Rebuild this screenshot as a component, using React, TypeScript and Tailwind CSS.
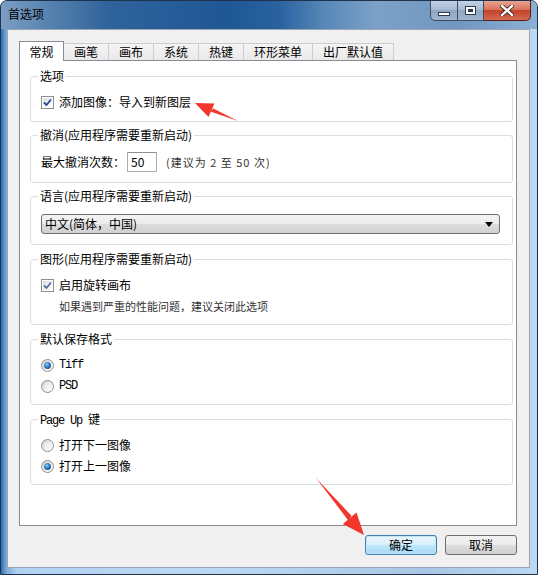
import React from "react";

function CheckBox({ light }: { light?: boolean }) {
  return (
    <span className="w-[13px] h-[13px] shrink-0 border border-[#8e8f8f] bg-white p-px flex">
      <span className="flex-1 bg-[linear-gradient(135deg,#d9dadb_0%,#f4f4f4_60%,#fdfdfd_100%)] flex items-center justify-center">
        <svg width="9" height="9" viewBox="0 0 9 9">
          <path
            d="M1 4.5 L3.5 7 L8 1.5"
            fill="none"
            stroke={light ? "#5b6f9e" : "#25428f"}
            strokeWidth="1.8"
          />
        </svg>
      </span>
    </span>
  );
}

function Radio({ checked }: { checked?: boolean }) {
  return (
    <span className="w-[13px] h-[13px] shrink-0 rounded-full border border-[#8e8f8f] bg-[linear-gradient(135deg,#cfd0d1_0%,#f1f1f1_60%,#ffffff_100%)] flex items-center justify-center">
      {checked ? (
        <span className="w-[7px] h-[7px] rounded-full bg-[radial-gradient(circle_at_40%_35%,#8fcdf2_0%,#2f78bd_45%,#123f74_100%)]" />
      ) : (
        <span className="w-[7px] h-[7px] rounded-full bg-[linear-gradient(135deg,#e6e6e6,#fafafa)]" />
      )}
    </span>
  );
}

function Group({
  label,
  className,
  children,
}: {
  label: React.ReactNode;
  className: string;
  children: React.ReactNode;
}) {
  return (
    <div className={className}>
      <span className="absolute -top-[9px] left-[7px] bg-white px-[2px] leading-[16px]">{label}</span>
      {children}
    </div>
  );
}

export default function App() {
  return (
    <div className="relative w-[538px] h-[575px] overflow-hidden bg-white font-['Noto_Sans_CJK_SC',sans-serif] text-[12px] text-black">
      <div className="flex flex-col w-full h-full rounded-t-[7px] overflow-hidden border border-[#1c324d] bg-[linear-gradient(90deg,#2f6eae_0%,#7aa9d8_1%,#b2d2f0_3%,#bcd8f3_40%,#a9c7e4_80%,#bcd8f3_100%)]">
        {/* title bar */}
        <div className="h-[28px] shrink-0 flex justify-between bg-[linear-gradient(90deg,#7c9fc3_0%,#5a85b1_8%,#2f639c_20%,#1f5795_42%,#2a62a0_52%,#5686b7_60%,#7ca1c8_70%,#7197c0_85%,#8cafd4_100%)]">
          <div className="pl-[7px] pt-[5px] leading-[16px] text-[12px] text-black">首选项</div>
          <div className="flex pr-[6px] -mt-px h-[21px]">
            <div className="w-[28px] h-full rounded-bl-[5px] border border-[#3b4e66] bg-[linear-gradient(180deg,#c4d2e3_0%,#a9bcd3_45%,#8ea7c4_50%,#9fb5cf_100%)] flex items-end justify-center pb-[4px]">
              <span className="w-[12px] h-[4px] bg-white border border-[#2b3b50]" />
            </div>
            <div className="w-[26px] h-full border border-l-0 border-[#3b4e66] bg-[linear-gradient(180deg,#c4d2e3_0%,#a9bcd3_45%,#8ea7c4_50%,#9fb5cf_100%)] flex items-center justify-center">
              <span className="w-[11px] h-[9px] bg-white border border-[#2b3b50] p-[2px] flex">
                <span className="flex-1 border border-[#2b3b50] border-t-2 bg-[#dfe6ee]" />
              </span>
            </div>
            <div className="w-[47px] h-full rounded-br-[5px] border border-l-0 border-[#5a1d14] bg-[linear-gradient(180deg,#e8a493_0%,#d8735e_45%,#c2432b_50%,#d66a52_100%)] flex items-center justify-center">
              <svg width="14" height="11" viewBox="0 0 14 11">
                <path d="M2 1 L12 10 M12 1 L2 10" stroke="#3a1a14" strokeWidth="4" strokeLinecap="square" />
                <path d="M2 1 L12 10 M12 1 L2 10" stroke="#ffffff" strokeWidth="2.4" strokeLinecap="square" />
              </svg>
            </div>
          </div>
        </div>

        {/* body */}
        <div className="flex-1 pl-[6px] pr-[7px] pb-[6px] flex">
          <div className="flex-1 flex flex-col bg-[#f0f0f0] border border-[#9aa6b4] pt-[11px] pl-[11px] pr-[12px]">
            {/* tabs */}
            <div className="flex items-end h-[19px]">
              <div className="relative z-10 -mb-px h-[20px] w-[45px] bg-white border border-b-0 border-[#898c95] flex items-center justify-center leading-[16px]">
                常规
              </div>
              <div className="h-[17px] w-[45px] border border-b-0 border-l-0 border-[#c9ccd1] bg-[linear-gradient(#f4f4f4,#e9e9e9)] flex items-center justify-center leading-[16px]">
                画笔
              </div>
              <div className="h-[17px] w-[45px] border border-b-0 border-l-0 border-[#c9ccd1] bg-[linear-gradient(#f4f4f4,#e9e9e9)] flex items-center justify-center leading-[16px]">
                画布
              </div>
              <div className="h-[17px] w-[45px] border border-b-0 border-l-0 border-[#c9ccd1] bg-[linear-gradient(#f4f4f4,#e9e9e9)] flex items-center justify-center leading-[16px]">
                系统
              </div>
              <div className="h-[17px] w-[45px] border border-b-0 border-l-0 border-[#c9ccd1] bg-[linear-gradient(#f4f4f4,#e9e9e9)] flex items-center justify-center leading-[16px]">
                热键
              </div>
              <div className="h-[17px] w-[69px] border border-b-0 border-l-0 border-[#c9ccd1] bg-[linear-gradient(#f4f4f4,#e9e9e9)] flex items-center justify-center leading-[16px]">
                环形菜单
              </div>
              <div className="h-[17px] w-[81px] border border-b-0 border-l-0 border-[#c9ccd1] bg-[linear-gradient(#f4f4f4,#e9e9e9)] flex items-center justify-center leading-[16px]">
                出厂默认值
              </div>
            </div>

            {/* panel */}
            <div className="h-[466px] border border-[#898c95] bg-white pl-[10px] pr-[3px] pt-[15px] flex flex-col">
              <Group label="选项" className="relative border border-[#d5dfe5] rounded-[3px] pl-[10px] pt-[16px] pb-[10px]">
                <div className="flex items-center h-[18px] gap-[5px]">
                  <CheckBox />
                  <span className="leading-[16px]">添加图像：导入到新图层</span>
                </div>
              </Group>

              <Group
                label="撤消(应用程序需要重新启动)"
                className="relative mt-[13px] border border-[#d5dfe5] rounded-[3px] pl-[10px] pt-[16px] pb-[10px]"
              >
                <div className="flex items-center h-[20px]">
                  <span className="leading-[16px]">最大撤消次数：</span>
                  <div className="ml-[2px] w-[30px] h-[20px] border border-[#abadb3] border-t-[#8e8f92] bg-white pl-[3px] flex items-center leading-[16px]">
                    50
                  </div>
                  <span className="ml-[9px] text-[11px] tracking-[1px] text-[#333] leading-[14px]">(建议为 2 至 50 次)</span>
                </div>
              </Group>

              <Group
                label="语言(应用程序需要重新启动)"
                className="relative mt-[13px] border border-[#d5dfe5] rounded-[3px] pl-[10px] pr-[12px] pt-[17px] pb-[10px]"
              >
                <div className="h-[20px] rounded-[3px] border border-[#707070] bg-[linear-gradient(180deg,#f3f3f3_0%,#ececec_48%,#dddddd_52%,#d1d1d1_100%)] flex items-center justify-between pl-[3px] pr-[6px]">
                  <span className="leading-[16px]">中文(简体，中国)</span>
                  <svg width="8" height="5" viewBox="0 0 8 5">
                    <path d="M0 0 L8 0 L4 5 Z" fill="#000" />
                  </svg>
                </div>
              </Group>

              <Group
                label="图形(应用程序需要重新启动)"
                className="relative mt-[14px] border border-[#d5dfe5] rounded-[3px] pl-[10px] pt-[16px] pb-[11px]"
              >
                <div className="flex items-center h-[18px] gap-[5px]">
                  <CheckBox light />
                  <span className="leading-[16px]">启用旋转画布</span>
                </div>
                <div className="mt-[5px] h-[14px] pl-[18px] text-[11px] leading-[14px] text-[#333]">
                  如果遇到严重的性能问题，建议关闭此选项
                </div>
              </Group>

              <Group
                label="默认保存格式"
                className="relative mt-[14px] border border-[#d5dfe5] rounded-[3px] pl-[10px] pt-[16px] pb-[9px]"
              >
                <div className="flex items-center h-[18px] gap-[5px]">
                  <Radio checked />
                  <span className="font-['Liberation_Mono',monospace] text-[12px] tracking-[-1.2px] leading-[16px]">Tiff</span>
                </div>
                <div className="mt-[3px] flex items-center h-[18px] gap-[5px]">
                  <Radio />
                  <span className="font-['Liberation_Mono',monospace] text-[12px] tracking-[-1.2px] leading-[16px]">PSD</span>
                </div>
              </Group>

              <Group
                label={
                  <span>
                    <span className="font-['Liberation_Mono',monospace] text-[12px] tracking-[-1.2px]">Page Up </span>
                    <span>键</span>
                  </span>
                }
                className="relative mt-[14px] border border-[#d5dfe5] rounded-[3px] pl-[10px] pt-[16px] pb-[9px]"
              >
                <div className="flex items-center h-[18px] gap-[5px]">
                  <Radio />
                  <span className="leading-[16px]">打开下一图像</span>
                </div>
                <div className="mt-[3px] flex items-center h-[18px] gap-[5px]">
                  <Radio checked />
                  <span className="leading-[16px]">打开上一图像</span>
                </div>
              </Group>
            </div>

            {/* buttons */}
            <div className="mt-[9px] flex justify-end gap-[8px]">
              <div className="w-[72px] h-[20px] rounded-[3px] border border-[#3c7fb1] bg-[linear-gradient(180deg,#eaf6fd_0%,#d9f0fc_48%,#bee6fd_52%,#a7d9f5_100%)] shadow-[inset_0_0_0_1px_#c4e5f6] flex items-center justify-center leading-[16px]">
                确定
              </div>
              <div className="w-[72px] h-[20px] rounded-[3px] border border-[#707070] bg-[linear-gradient(180deg,#f2f2f2_0%,#ebebeb_48%,#dddddd_52%,#cfcfcf_100%)] flex items-center justify-center leading-[16px]">
                取消
              </div>
            </div>
          </div>
        </div>
      </div>

      {/* red annotation arrows */}
      <svg className="absolute inset-0 pointer-events-none" width="538" height="575" viewBox="0 0 538 575">
        <polygon points="238,121 213.2,108.6 210.4,111.4" fill="#f2362b" />
        <polygon points="195,103 214.5,103.5 208.5,117" fill="#f2362b" />
        <polygon points="316,478 351.5,515.8 348.3,520.4" fill="#f2362b" />
        <polygon points="364,535 356.5,512.5 342.8,524" fill="#f2362b" />
      </svg>
    </div>
  );
}
